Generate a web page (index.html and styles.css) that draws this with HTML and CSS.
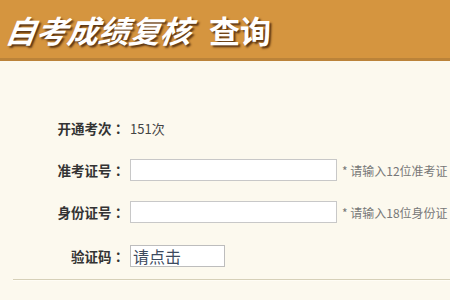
FILE: index.html
```html
<!DOCTYPE html>
<html lang="zh-CN">
<head>
<meta charset="utf-8">
<link rel="stylesheet" href="styles.css">
</head>
<body>
<div class="header">
  <h1 class="title"><span class="title-main">自考成绩复核</span><span class="title-sub">查询</span></h1>
</div>
<div class="form">
  <div class="row">
    <span class="label">开通考次<span class="colon" lang="zh-TW">：</span></span>
    <span class="value">151次</span>
  </div>
  <div class="row">
    <span class="label">准考证号<span class="colon" lang="zh-TW">：</span></span>
    <span class="field"></span>
    <span class="hint">* 请输入12位准考证</span>
  </div>
  <div class="row">
    <span class="label">身份证号<span class="colon" lang="zh-TW">：</span></span>
    <span class="field"></span>
    <span class="hint">* 请输入18位身份证</span>
  </div>
  <div class="row row-code">
    <span class="label">验证码<span class="colon" lang="zh-TW">：</span></span>
    <span class="code">请点击</span>
  </div>
  <div class="rule"></div>
</div>
</body>
</html>
```
FILE: styles.css
```css
html, body {
  margin: 0;
  padding: 0;
  overflow: hidden;
}
body {
  width: 450px;
  height: 300px;
  background: #fcf9ee;
  font-family: "Noto Sans CJK SC", "Noto Sans", sans-serif;
  color: #333;
}
.header {
  height: 58px;
  background: #d5953f;
  border-bottom: 3px solid #bb8339;
  display: flex;
  align-items: center;
  padding-left: 6px;
}
.title {
  margin: 0;
  display: flex;
  align-items: center;
  font-size: 31px;
  font-weight: 700;
  color: #fff;
  line-height: 1;
  text-shadow: 2px 2px 2px #5a3412;
  white-space: nowrap;
}
.title-main {
  display: inline-block;
  font-style: italic;
  transform: skewX(-8deg);
}
.title-sub {
  margin-left: 17px;
}
.form {
  padding-top: 46px;
}
.row {
  height: 42px;
  display: flex;
  align-items: center;
  white-space: nowrap;
}
.row-code {
  margin-top: 2px;
}
.label {
  width: 125px;
  flex: none;
  text-align: right;
  font-size: 13.5px;
  font-weight: 700;
  color: #333;
  margin-right: 5px;
}
.colon {
  font-family: "Noto Sans CJK TC", "Noto Sans CJK SC", sans-serif;
}
.value {
  font-size: 13px;
  color: #444;
}
.field {
  width: 205px;
  height: 20px;
  flex: none;
  background: #fff;
  border: 1px solid #c8c8c8;
}
.hint {
  margin-left: 5px;
  font-size: 12px;
  color: #777;
}
.code {
  width: 91px;
  height: 20px;
  flex: none;
  background: #fff;
  border: 1px solid #bdbdbd;
  padding-left: 2px;
  font-size: 16px;
  line-height: 20px;
  color: #3c4a5e;
}
.rule {
  margin-top: 2px;
  margin-left: 13px;
  height: 1px;
  background: #d6d0b8;
  border-bottom: 1px solid #fffdf5;
}
```
